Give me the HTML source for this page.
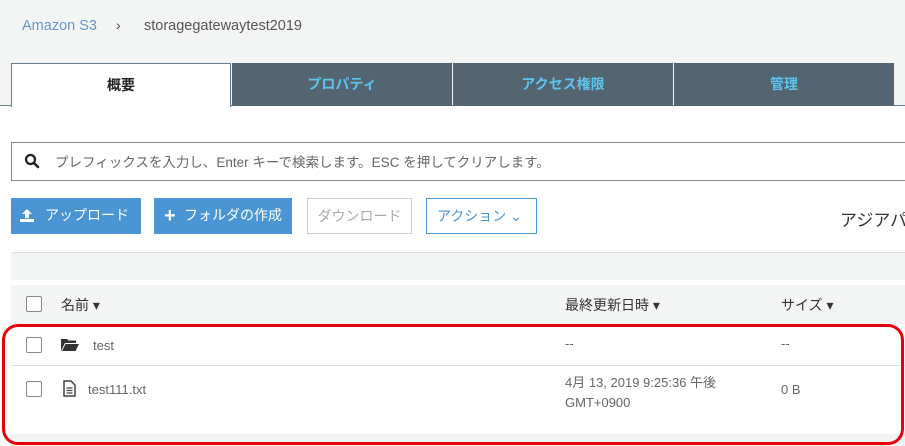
<!DOCTYPE html>
<html><head><meta charset="utf-8"><style>
*{box-sizing:border-box;margin:0;padding:0}
body{width:905px;height:446px;overflow:hidden;background:#fff;font-family:"Liberation Sans","Noto Sans CJK JP",sans-serif;position:relative}
.a{position:absolute}
.hdr{left:0;top:0;width:905px;height:106px;background:#f3f5f5}
.tab{top:63px;height:43px;background:#536571;color:#5ec4ee;font-weight:bold;font-size:14px;text-align:center;line-height:42px}
.btn{top:198px;height:36px;font-size:14px;line-height:34px}
.cb{width:16px;height:16px;border:1px solid #888;border-radius:2px;background:#fff}
.t{font-size:13px;color:#666}
</style></head><body>
<div class="a hdr"></div>
<div class="a" style="left:22px;top:18px;font-size:14.5px;color:#6b96c7">Amazon S3</div>
<div class="a" style="left:116px;top:17px;font-size:14px;color:#444">›</div>
<div class="a" style="left:144px;top:18px;font-size:14.5px;color:#555">storagegatewaytest2019</div>
<div class="a" style="left:0;top:105px;width:905px;height:1px;background:#6a7b88"></div>
<div class="a" style="left:11px;top:63px;width:220px;height:44px;background:#fff;border:1px solid #6a7b88;border-bottom:none;text-align:center;line-height:42px;font-weight:bold;font-size:14px;color:#222">概要</div>
<div class="a tab" style="left:232px;width:220px">プロパティ</div>
<div class="a tab" style="left:453px;width:220px">アクセス権限</div>
<div class="a tab" style="left:674px;width:220px">管理</div>
<div class="a" style="left:11px;top:142px;width:900px;height:39px;border:1px solid #888;border-right:none"></div>
<svg class="a" style="left:24px;top:153px" width="16" height="16" viewBox="0 0 16 16"><circle cx="6.5" cy="6.5" r="4.5" fill="none" stroke="#222" stroke-width="2.2"/><path d="M10 10l4 4" stroke="#222" stroke-width="2.6" stroke-linecap="round"/></svg>
<div class="a" style="left:55px;top:151px;font-size:13.5px;color:#666">プレフィックスを入力し、Enter キーで検索します。ESC を押してクリアします。</div>
<div class="a btn" style="left:11px;width:130px;background:#4a96d4;color:#fff;padding-left:34px">アップロード</div>
<svg class="a" style="left:19px;top:208px" width="16" height="15" viewBox="0 0 16 15"><path d="M8 1l5 5h-3v4H6V6H3z" fill="#fff"/><path d="M1 11h14v3H1z" fill="#fff"/></svg>
<div class="a btn" style="left:154px;width:138px;background:#4a96d4;color:#fff;padding-left:30px">フォルダの作成</div>
<div class="a" style="left:164px;top:209px;color:#fff;font-size:20px;font-weight:bold;line-height:14px">+</div>
<div class="a btn" style="left:307px;width:105px;border:1px solid #ccc;color:#aaa;text-align:center">ダウンロード</div>
<div class="a btn" style="left:426px;width:111px;border:1px solid #4a96d4;color:#4a96d4;padding-left:10px">アクション ⌄</div>
<div class="a" style="left:840px;top:206px;font-size:17px;color:#333;white-space:nowrap">アジアパ</div>
<div class="a" style="left:11px;top:252px;width:894px;height:1px;background:#ddd"></div>
<div class="a" style="left:11px;top:253px;width:894px;height:27px;background:#f3f5f5"></div>
<div class="a" style="left:11px;top:285px;width:894px;height:39px;background:#f3f5f5"></div>
<div class="a cb" style="left:26px;top:296px"></div>
<div class="a" style="left:61px;top:295px;font-size:14px;color:#333">名前 ▾</div>
<div class="a" style="left:565px;top:295px;font-size:14px;color:#333">最終更新日時 ▾</div>
<div class="a" style="left:781px;top:295px;font-size:14px;color:#333">サイズ ▾</div>
<div class="a cb" style="left:26px;top:337px"></div>
<svg class="a" style="left:61px;top:339px" width="18" height="12" viewBox="0 0 18 12"><path d="M0 0h6l1.5 1.5H15V4H4L0 12z" fill="#333"/><path d="M4.5 5H18l-3.5 7H1z" fill="#333"/></svg>
<div class="a t" style="left:93px;top:338px">test</div>
<div class="a t" style="left:565px;top:336px">--</div>
<div class="a t" style="left:781px;top:336px">--</div>
<div class="a" style="left:11px;top:365px;width:894px;height:1px;background:#ddd"></div>
<div class="a cb" style="left:26px;top:381px"></div>
<svg class="a" style="left:63px;top:380px" width="13" height="17" viewBox="0 0 13 17"><path d="M1 1h7l4 4v11H1z" fill="#fff" stroke="#444" stroke-width="1.5"/><path d="M3.5 8h6M3.5 10.5h6M3.5 13h6" stroke="#444" stroke-width="1.3"/></svg>
<div class="a t" style="left:88px;top:382px">test111.txt</div>
<div class="a t" style="left:565px;top:373px;line-height:20px">4月 13, 2019 9:25:36 午後<br>GMT+0900</div>
<div class="a t" style="left:781px;top:382px">0 B</div>
<div class="a" style="left:11px;top:434px;width:894px;height:12px;background:#f3f5f5"></div>
<div class="a" style="left:2px;top:324px;width:902px;height:121px;border:3px solid #e8000b;border-radius:16px"></div>
</body></html>
